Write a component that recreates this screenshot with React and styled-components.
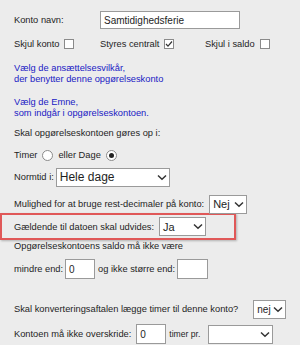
import React from 'react';
import styled, { createGlobalStyle } from 'styled-components';

const Global = createGlobalStyle`
  html, body {
    margin: 0;
    padding: 0;
    background: #ececec;
  }
  body {
    font-family: "Liberation Sans", Arial, sans-serif;
    font-size: 9.3px;
    color: #1e1e1e;
  }
`;

const Form = styled.div`
  width: 300px;
  height: 345px;
  overflow: hidden;
  padding-left: 14px;
  box-sizing: border-box;
`;

const Row = styled.div`
  display: flex;
  align-items: center;
  height: ${(p) => p.$h}px;
  margin-top: ${(p) => p.$mt || 0}px;
  white-space: nowrap;
`;

const Columns = styled.div`
  display: grid;
  grid-template-columns: 86px 105px auto;
  align-items: center;
  height: 20px;
  margin-top: 4px;
`;

const Pair = styled.div`
  display: flex;
  align-items: center;
  gap: 5px;
`;

const Label = styled.span`
  margin-right: ${(p) => p.$mr ?? 3}px;
  font-size: ${(p) => (p.$size ? `${p.$size}px` : 'inherit')};
`;

const BlueText = styled.div`
  color: #2020c4;
  line-height: 11px;
  margin-top: ${(p) => p.$mt}px;
`;

const TextInput = styled.div`
  box-sizing: border-box;
  width: ${(p) => p.$w}px;
  height: ${(p) => p.$h || 20}px;
  background: #fff;
  border: 1px solid #9a9a9a;
  padding: 0 3px;
  font-size: ${(p) => p.$size || 10}px;
  display: flex;
  align-items: center;
  margin-right: ${(p) => p.$mr || 0}px;
`;

const Box = styled.span`
  box-sizing: border-box;
  width: 10px;
  height: 10px;
  background: #fff;
  border: 1px solid #8a8a8a;
  display: inline-flex;
  align-items: center;
  justify-content: center;
`;

const Radio = styled.span`
  box-sizing: border-box;
  width: 11px;
  height: 11px;
  border-radius: 50%;
  background: #fff;
  border: 1px solid #8a8a8a;
  display: inline-flex;
  align-items: center;
  justify-content: center;
  margin: 0 5px 0 5px;

  &::after {
    content: '';
    width: 5px;
    height: 5px;
    border-radius: 50%;
    background: ${(p) => (p.$on ? '#222' : 'transparent')};
  }
`;

const SelectBox = styled.div`
  box-sizing: border-box;
  width: ${(p) => p.$w}px;
  height: 19px;
  background: #fff;
  border: 1px solid #9a9a9a;
  display: flex;
  align-items: center;
  justify-content: space-between;
  padding: 0 2px 0 3px;
  font-size: ${(p) => p.$size || 10}px;
`;

const Highlight = styled.div`
  box-sizing: border-box;
  display: flex;
  align-items: center;
  width: 236px;
  height: 27px;
  margin-left: -14px;
  padding-left: 12px;
  border: 2px solid #e05858;
  box-shadow: 1px 1px 2px rgba(0, 0, 0, 0.25);
  white-space: nowrap;
`;

const Chevron = () => (
  <svg width="10" height="7" viewBox="0 0 10 7">
    <path d="M1 1.5 L5 5.2 L9 1.5" fill="none" stroke="#333" strokeWidth="1.5" />
  </svg>
);

const Check = () => (
  <svg width="8" height="8" viewBox="0 0 8 8">
    <path d="M1 4 L3 6.2 L7 1.5" fill="none" stroke="#333" strokeWidth="1.2" />
  </svg>
);

const Select = ({ value, w, size }) => (
  <SelectBox $w={w} $size={size}>
    <span>{value}</span>
    <Chevron />
  </SelectBox>
);

export default function App() {
  return (
    <>
      <Global />
      <Form>
        <Row $h={20} $mt={10}>
          <Label style={{ width: 86 }} $mr={0}>Konto navn:</Label>
          <TextInput $w={140} $h={18}>Samtidighedsferie</TextInput>
        </Row>

        <Columns>
          <Pair>
            <Label $mr={0}>Skjul konto</Label>
            <Box />
          </Pair>
          <Pair>
            <Label $mr={0}>Styres centralt</Label>
            <Box>
              <Check />
            </Box>
          </Pair>
          <Pair>
            <Label $mr={0}>Skjul i saldo</Label>
            <Box />
          </Pair>
        </Columns>

        <BlueText $mt={9}>
          Vælg de ansættelsesvilkår,
          <br />
          der benytter denne opgørelseskonto
        </BlueText>

        <BlueText $mt={12}>
          Vælg de Emne,
          <br />
          som indgår i opgørelseskontoen.
        </BlueText>

        <Row $h={12} $mt={8}>
          Skal opgørelseskontoen gøres op i:
        </Row>

        <Row $h={16} $mt={8}>
          <span>Timer</span>
          <Radio />
          <span>eller Dage</span>
          <Radio $on />
        </Row>

        <Row $h={20} $mt={4}>
          <Label $mr={2}>Normtid i:</Label>
          <Select value="Hele dage" w={114} size={12} />
        </Row>

        <Row $h={18} $mt={8}>
          <Label $mr={5}>Mulighed for at bruge rest-decimaler på konto:</Label>
          <Select value="Nej" w={38} size={11} />
        </Row>

        <Highlight>
          <Label $mr={5}>Gældende til datoen skal udvides:</Label>
          <Select value="Ja" w={47} size={11} />
        </Highlight>

        <Row $h={12}>Opgørelseskontoens saldo må ikke være</Row>

        <Row $h={20} $mt={7}>
          <Label $mr={2}>mindre end:</Label>
          <TextInput $w={30} $mr={3}>0</TextInput>
          <Label $mr={2}>og ikke større end:</Label>
          <TextInput $w={31} />
        </Row>

        <Row $h={20} $mt={20}>
          <Label $mr={15}>Skal konverteringsaftalen lægge timer til denne konto?</Label>
          <Select value="nej" w={33} size={10} />
        </Row>

        <Row $h={20} $mt={5}>
          <Label $mr={5}>Kontoen må ikke overskride:</Label>
          <TextInput $w={30} $mr={3}>0</TextInput>
          <Label $size={8.6} $mr={8}>timer pr.</Label>
          <Select value="" w={65} />
        </Row>
      </Form>
    </>
  );
}
